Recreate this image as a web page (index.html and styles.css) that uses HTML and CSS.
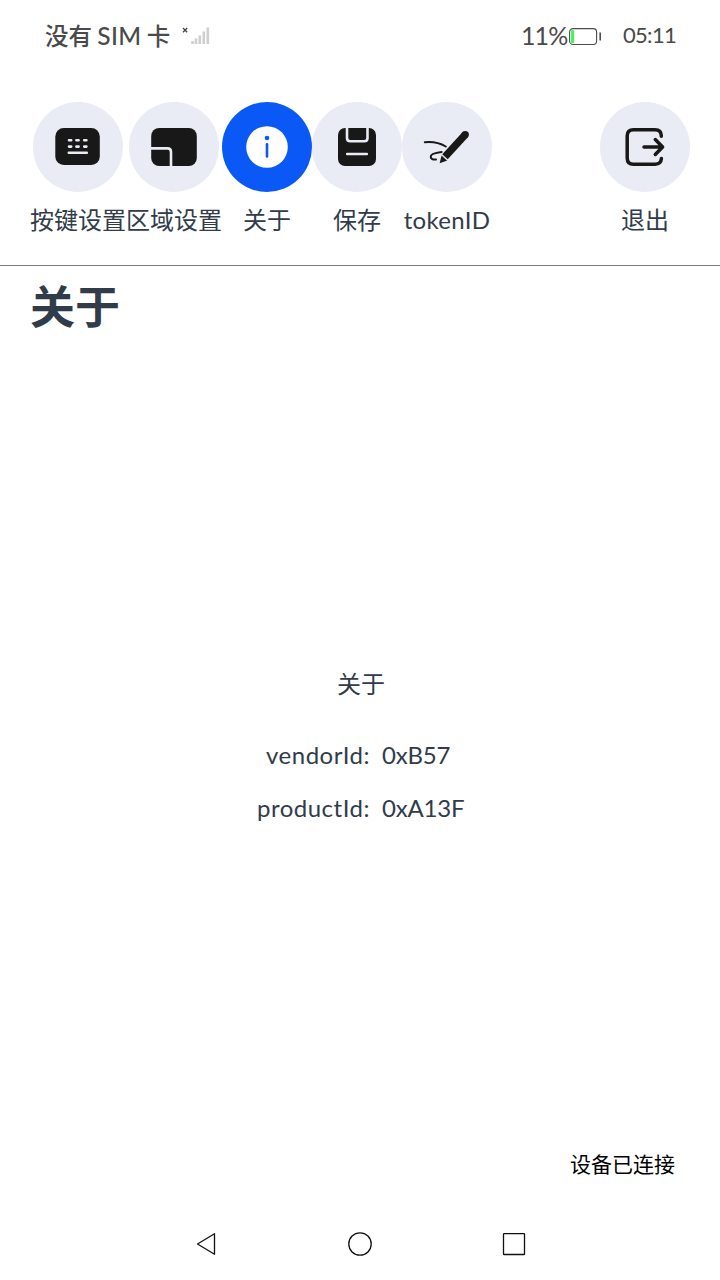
FILE: index.html
```html
<!DOCTYPE html>
<html lang="zh-CN">
<head>
<meta charset="utf-8">
<title>关于</title>
<link rel="stylesheet" href="styles.css">
</head>
<body>
<div class="screen">
  <header class="status">
    <span class="carrier">没有 <span class="sim">SIM</span> 卡</span>
    <svg class="signal" width="28" height="20" viewBox="0 0 28 20">
      <path d="M1 2l4.200 4.200M5.200 2L1 6.200" stroke="#444" stroke-width="1.300"/>
      <path d="M10.500 15v3M14 12.500V18M17.800 9.500V18M21.800 5.500V18M25.800 1.500V18" stroke="#cfcfcf" stroke-width="2.600"/>
    </svg>
    <span class="percent">11%</span>
    <svg class="battery" width="33" height="18" viewBox="0 0 33 18">
      <rect x=".6" y=".6" width="27" height="15.900" rx="3.500" fill="none" stroke="#4c4c4c" stroke-width="1.100"/>
      <rect x="2" y="2" width="3.200" height="13" rx="1" fill="#46f55c"/>
      <path d="M31.200 4.500v8" stroke="#4c4c4c" stroke-width="1.600"/>
    </svg>
    <span class="clock">05:11</span>
  </header>

  <nav class="toolbar">
    <div class="tool">
      <svg class="icon" viewBox="0 0 90 90">
        <rect x="22.300" y="26" width="44.500" height="37" rx="8.500" fill="#181818"/>
        <path d="M36 38.300h2.200M43.400 38.300h2.200M51.200 38.300h2.200M36 44.600h2.200M43.400 44.600h2.200M51.200 44.600h2.200M35.800 50.700h18" class="cut"/>
      </svg>
      <span class="label">按键设置</span>
    </div>
    <div class="tool">
      <svg class="icon" viewBox="0 0 90 90">
        <rect x="22.200" y="26" width="45.600" height="38" rx="8" fill="#181818"/>
        <path d="M21 46.400h17.500q3.500 0 3.500 3.500V65" class="cut"/>
      </svg>
      <span class="label">区域设置</span>
    </div>
    <div class="tool active">
      <svg class="icon" viewBox="0 0 90 90">
        <circle cx="45" cy="45" r="20.800" fill="#fff"/>
        <circle cx="45" cy="36" r="2.300" fill="#0a59f7"/>
        <path d="M45 42.300v12.200" stroke="#0a59f7" stroke-width="2.600" stroke-linecap="round"/>
      </svg>
      <span class="label">关于</span>
    </div>
    <div class="tool">
      <svg class="icon" viewBox="0 0 90 90">
        <rect x="26" y="26" width="38" height="38" rx="7" fill="#181818"/>
        <path d="M35 25v11q0 3.300 3.300 3.300h13.900q3.300 0 3.300-3.300V25M35.200 52h19.600" class="cut"/>
      </svg>
      <span class="label">保存</span>
    </div>
    <div class="tool">
      <svg class="icon" viewBox="0 0 90 90">
        <path d="M43 54.700L63.400 32.400" stroke="#181818" stroke-width="7.400"/>
        <circle cx="63.200" cy="32.600" r="3.700" fill="#181818"/>
        <path d="M39.600 53.300l5.700 5.200-7.700 2.700z" fill="#181818"/>
        <path d="M38.800 52.500l7.200 6.500" stroke="#e9ecf5" stroke-width=".7"/>
        <path d="M22.800 40.200c8-.8 14.800.6 21 4.300M39.600 50c-6.300.8-11.200 2.400-10.900 4.800.2 2 2.300 2.900 5.300 2.800" fill="none" stroke="#181818" stroke-width="2" stroke-linecap="round"/>
      </svg>
      <span class="label latin token">tokenID</span>
    </div>
    <div class="tool exit">
      <svg class="icon" viewBox="0 0 90 90">
        <path d="M61.300 34.200v-.4q0-6-6.300-6H33.500q-6.300 0-6.300 6v22.100q0 6.300 6.300 6.300h21.700q5.800 0 6.200-5.700M44 45h18M55.300 37.500l7.300 7.500-7.300 7.500" fill="none" stroke="#181818" stroke-width="3.500" stroke-linecap="round" stroke-linejoin="round"/>
      </svg>
      <span class="label">退出</span>
    </div>
  </nav>

  <main class="page">
    <h1 class="title">关于</h1>
    <section class="about">
      <p class="heading">关于</p>
      <div class="info">
        <span class="key latin vendor">vendorId:</span><span class="value latin">0xB57</span>
        <span class="key latin product">productId:</span><span class="value latin">0xA13F</span>
      </div>
    </section>
    <p class="connected">设备已连接</p>
  </main>

  <footer class="navbar">
    <svg width="24" height="28" viewBox="0 0 24 28"><path d="M3.500 14L20.500 3.700v20.600z" class="nav-line"/></svg>
    <svg width="24" height="28" viewBox="0 0 24 28"><circle cx="12" cy="14" r="11.200" class="nav-line"/></svg>
    <svg width="24" height="28" viewBox="0 0 24 28"><rect x="1.500" y="3.700" width="21" height="20.800" rx=".6" class="nav-line"/></svg>
  </footer>
</div>
</body>
</html>
```
FILE: styles.css
```css
* { box-sizing: border-box; }
body {
  margin: 0;
  background: #fff;
  color: #303c4a;
  font-family: "Noto Sans CJK SC", sans-serif;
  font-size: 24px;
}
h1, p { margin: 0; }
svg { display: block; flex: none; }
.latin, .sim, .percent, .clock { font-family: Lato, "Noto Sans CJK SC", sans-serif; }
.screen {
  width: 720px;
  height: 1280px;
  display: flex;
  flex-direction: column;
  overflow: hidden;
}
.status {
  height: 72px;
  padding: 0 44px 3px 45px;
  display: flex;
  align-items: center;
  color: #4a4a4a;
  white-space: nowrap;
}
.carrier { width: 137px; font-weight: 500; font-size: 23.5px; }
.sim { font-size: 24.5px; letter-spacing: 0.3px; }
.signal { margin-top: 3px; }
.percent { margin-left: auto; width: 48px; font-size: 25px; letter-spacing: -0.9px; }
.battery { margin-top: 4px; }
.clock { margin-left: 21px; width: 53px; font-size: 22px; letter-spacing: -0.7px; }
.toolbar {
  height: 194px;
  padding: 30px 30px 0;
  display: flex;
  border-bottom: 1px solid #7b7b7b;
}
.tool {
  min-width: 90px;
  display: flex;
  flex-direction: column;
  align-items: center;
}
.icon {
  width: 90px;
  height: 90px;
  border-radius: 50%;
  background: #e9ecf5;
}
.active .icon { background: #0a59f7; }
.exit { margin-left: auto; }
.label { margin-top: 9px; line-height: 36px; white-space: nowrap; }
.token { margin-top: 10px; letter-spacing: 0.3px; }
.cut {
  fill: none;
  stroke: #e9ecf5;
  stroke-width: 2.6;
  stroke-linecap: round;
}
.page {
  height: 942px;
  display: flex;
  flex-direction: column;
}
.title {
  padding: 7px 30px 0;
  font-size: 45px;
  line-height: 64px;
  font-weight: 700;
}
.about {
  flex: 1;
  padding-top: 328px;
  display: flex;
  flex-direction: column;
  align-items: center;
}
.heading { padding-left: 2px; line-height: 36px; }
.info {
  align-self: stretch;
  margin-top: 27px;
  display: grid;
  grid-template-columns: 370px 1fr;
  column-gap: 12px;
  line-height: 53px;
}
.key { text-align: right; letter-spacing: 0.5px; }
.value { letter-spacing: -0.2px; }
.connected {
  height: 60px;
  padding-right: 45px;
  text-align: right;
  color: #000;
  font-size: 21px;
  line-height: 30px;
}
.navbar {
  flex: 1;
  padding: 22px 194px 0;
  display: flex;
  justify-content: space-between;
}
.nav-line { fill: none; stroke: #111; stroke-width: 1.3; stroke-linejoin: round; }
```
